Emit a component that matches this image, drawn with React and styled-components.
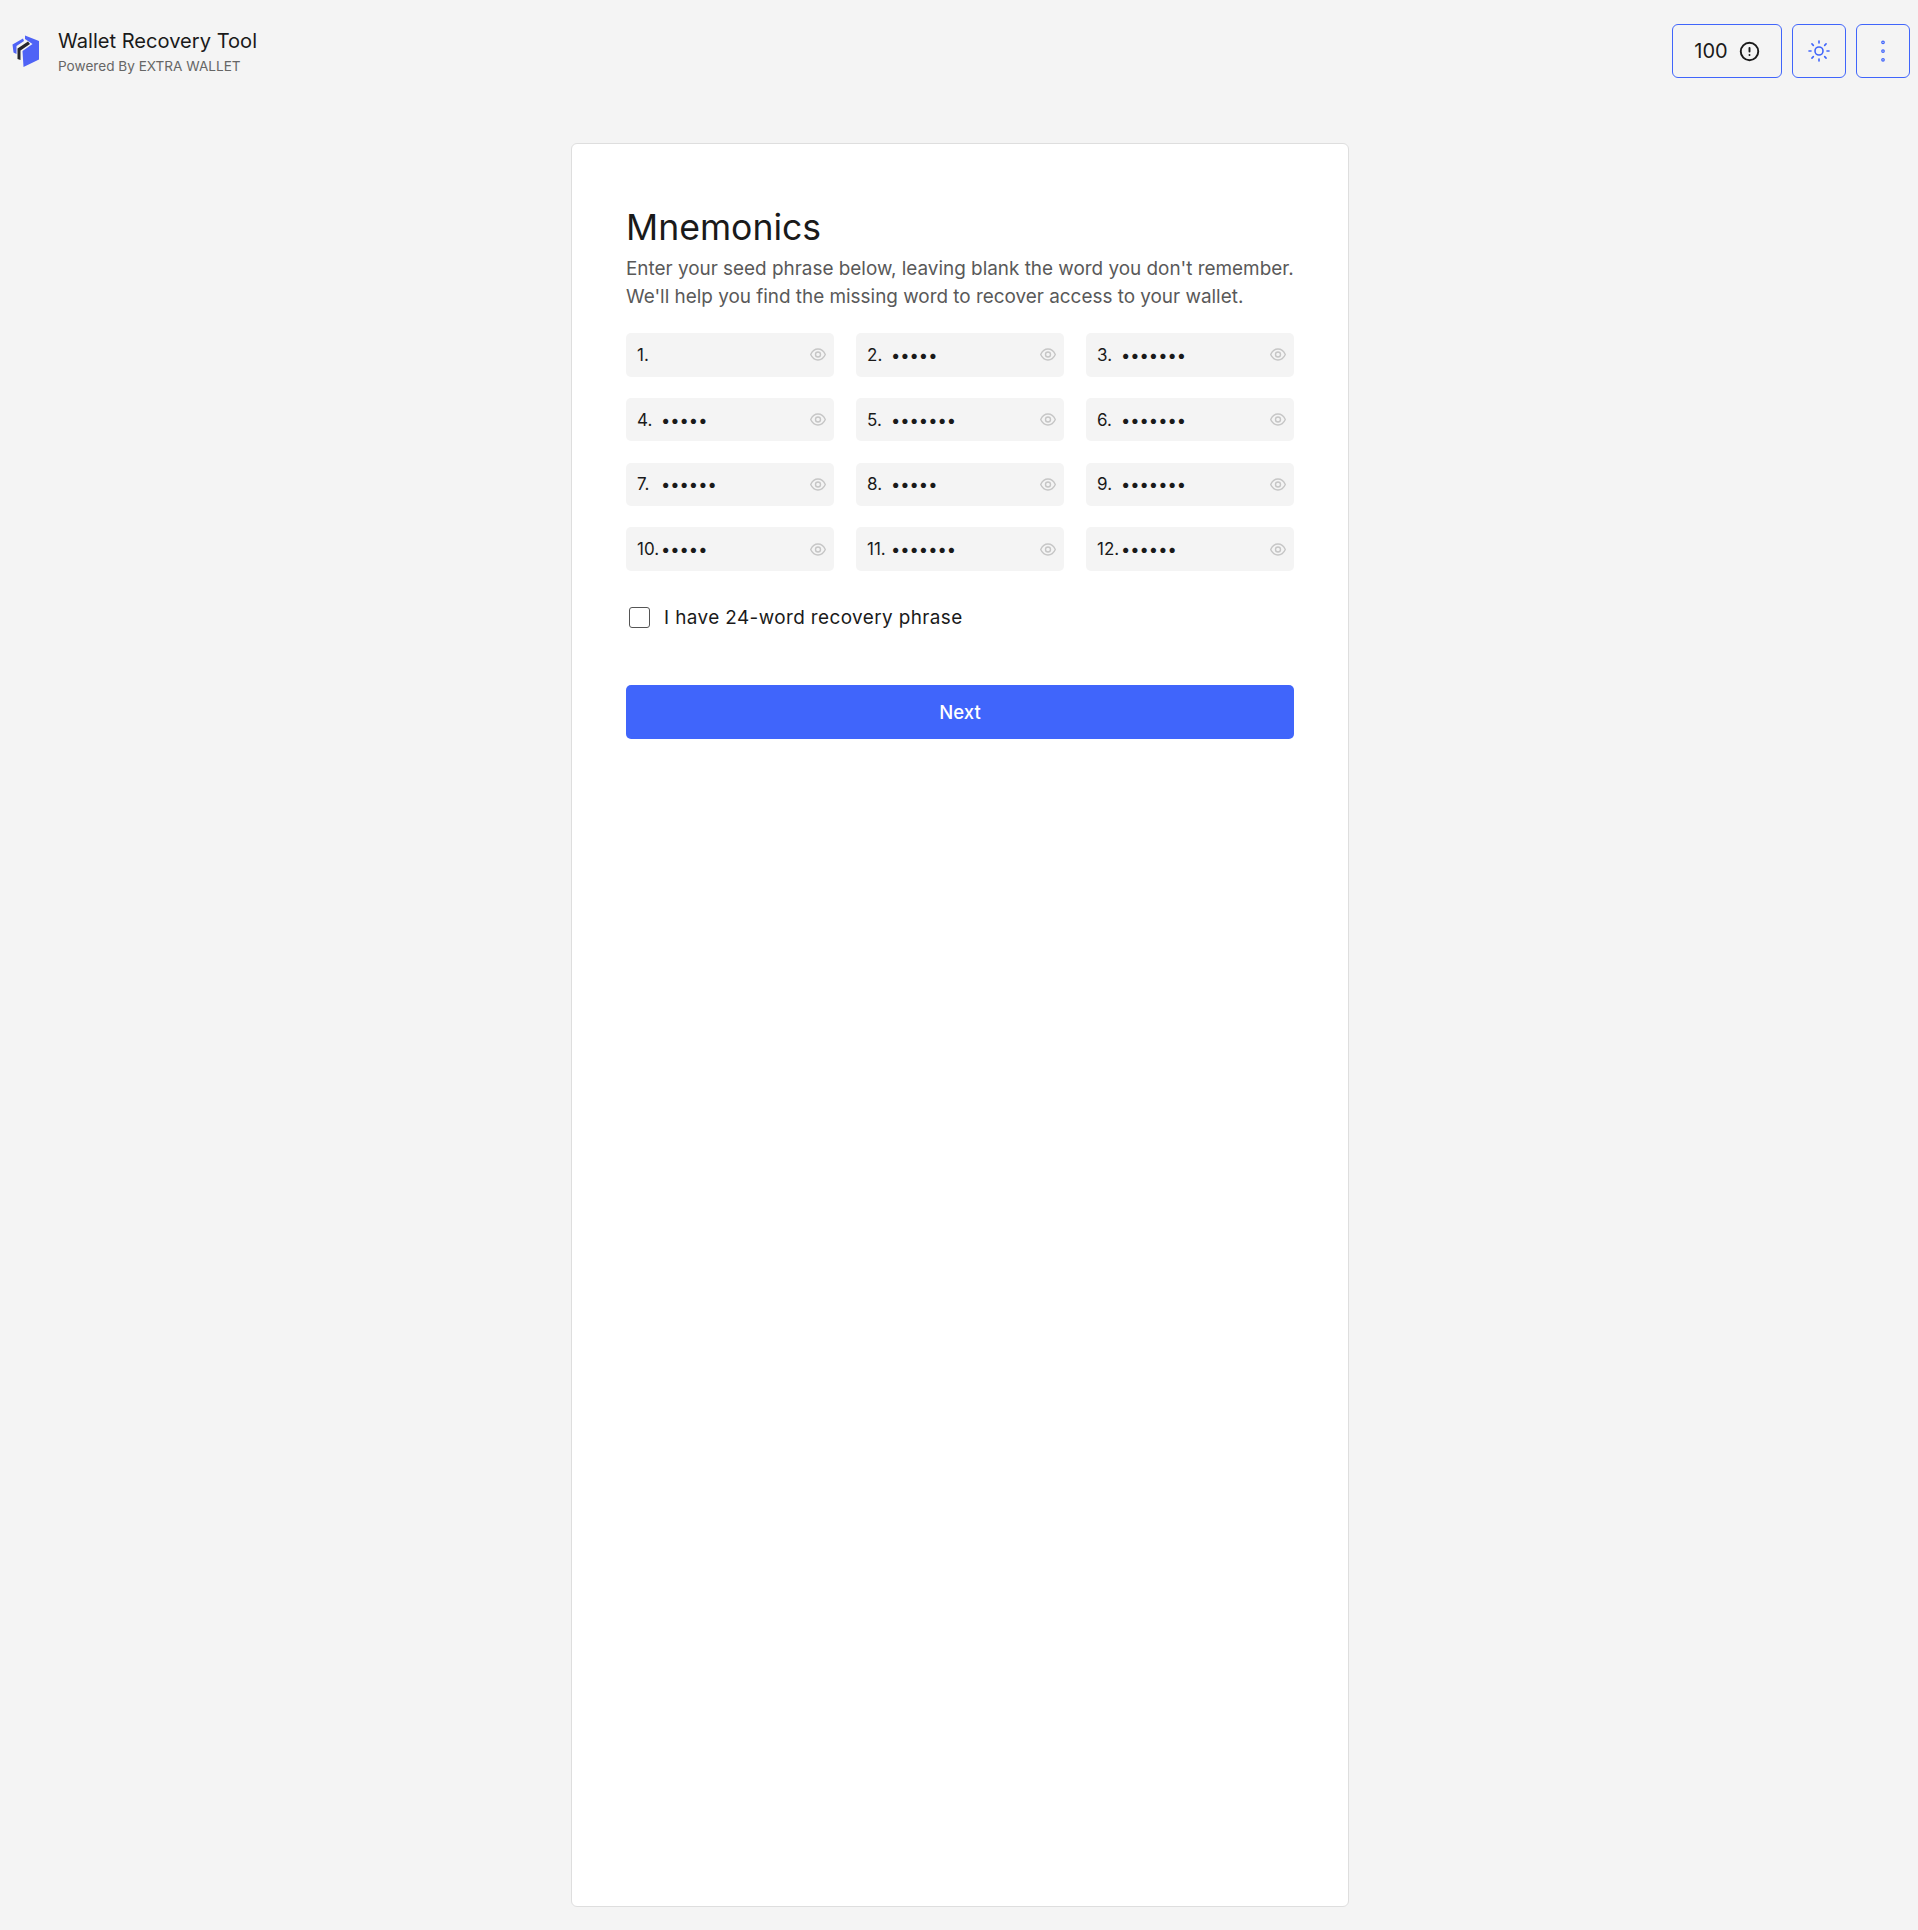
import React from 'react';
import styled, { createGlobalStyle } from 'styled-components';
import { Sun, CircleAlert, EllipsisVertical } from 'lucide-react';

const GlobalStyle = createGlobalStyle`
  html, body {
    margin: 0;
    padding: 0;
    background: #f4f4f4;
    font-family: Inter, "Liberation Sans", sans-serif;
    color: #1a1a1a;
  }
  * {
    box-sizing: border-box;
  }
`;

const Page = styled.div`
  width: 100%;
  height: 1930px;
  display: flex;
  flex-direction: column;
`;

const Header = styled.header`
  height: 143px;
  flex-shrink: 0;
  padding: 24px 8px 0 12px;
  display: flex;
  justify-content: space-between;
  align-items: flex-start;
`;

const Brand = styled.div`
  display: flex;
  align-items: center;
  gap: 18px;
  height: 54px;
`;

const BrandText = styled.div`
  display: flex;
  flex-direction: column;
  gap: 2px;
`;

const BrandTitle = styled.div`
  font-size: 20.1px;
  line-height: 28px;
  color: #1a1a1a;
`;

const BrandSub = styled.div`
  font-size: 13.6px;
  line-height: 18px;
  color: #666;
`;

const Actions = styled.div`
  display: flex;
  gap: 10px;
`;

const ActionButton = styled.button`
  height: 54px;
  width: ${(p) => (p.$wide ? '110px' : '54px')};
  padding: 0;
  display: flex;
  align-items: center;
  justify-content: center;
  gap: 11px;
  background: transparent;
  border: 1px solid #4065fb;
  border-radius: 6px;
  color: #4065fb;
  font-family: inherit;
`;

const CountText = styled.span`
  font-size: 20px;
  color: #1a1a1a;
`;

const Card = styled.main`
  width: 778px;
  height: 1764px;
  margin: 0 0 0 571px;
  padding: 61px 54px 0;
  background: #fff;
  border: 1px solid #dedede;
  border-radius: 6px;
`;

const Title = styled.h1`
  margin: 0 0 4px;
  font-size: 35.6px;
  line-height: 46px;
  font-weight: 400;
  color: #1a1a1a;
`;

const Description = styled.p`
  margin: 0 0 22px;
  font-size: 18.9px;
  line-height: 28px;
  color: #595959;
  white-space: nowrap;
`;

const WordGrid = styled.div`
  display: grid;
  grid-template-columns: repeat(3, 208px);
  column-gap: 22px;
  row-gap: 21.3px;
`;

const Field = styled.label`
  height: 43.5px;
  padding: 0 8px 0 11px;
  display: flex;
  align-items: center;
  background: #f4f4f4;
  border-radius: 5px;
`;

const FieldNumber = styled.span`
  width: 24px;
  flex-shrink: 0;
  font-size: 17px;
  white-space: nowrap;
  color: #1a1a1a;
`;

const WordInput = styled.input`
  flex: 1;
  min-width: 0;
  border: 0;
  outline: 0;
  padding: 0;
  background: transparent;
  font-family: inherit;
  font-size: 16.5px;
  color: #1a1a1a;
`;

const CheckRow = styled.label`
  display: flex;
  align-items: center;
  gap: 14px;
  margin: 33px 0 0 3px;
  height: 28px;
`;

const CheckBox = styled.span`
  width: 21px;
  height: 21px;
  background: #fff;
  border: 1px solid #555;
  border-radius: 3px;
`;

const CheckLabel = styled.span`
  font-size: 18.9px;
  letter-spacing: 0.41px;
  color: #1a1a1a;
`;

const NextButton = styled.button`
  width: 100%;
  height: 54px;
  margin-top: 53px;
  border: 0;
  border-radius: 5px;
  background: #4065fb;
  color: #fff;
  font-family: inherit;
  font-size: 18.5px;
  font-weight: 500;
`;

const Logo = () => (
  <svg width="28" height="34" viewBox="0 0 28 34" style={{ flexShrink: 0 }}>
    <path d="M13 1.5 L27 7 V25.5 L11.5 33 L10.5 17 L20.5 10 L13 5 Z" fill="#4f63f6" />
    <path d="M0.5 10.5 L11 4.5 L12 7 L4.5 12 V20 L1.5 18.5 Z" fill="#4f63f6" />
    <path d="M5.5 25 V14.5 L16 7.5 L18 10 L8.5 16.5 V26 Z" fill="#26262c" />
  </svg>
);

const EyeIcon = () => (
  <svg width="16" height="13" viewBox="0 0 16 13" fill="none" stroke="#c6c6c6" strokeWidth="1.4" style={{ flexShrink: 0 }}>
    <path d="M0.7 6.5 C2.4 2.8 5 1 8 1 C11 1 13.6 2.8 15.3 6.5 C13.6 10.2 11 12 8 12 C5 12 2.4 10.2 0.7 6.5 Z" />
    <circle cx="8" cy="6.5" r="2.5" />
  </svg>
);

const words = [0, 5, 7, 5, 7, 7, 6, 5, 7, 5, 7, 6];

export default function App() {
  return (
    <Page>
      <GlobalStyle />
      <Header>
        <Brand>
          <Logo />
          <BrandText>
            <BrandTitle>Wallet Recovery Tool</BrandTitle>
            <BrandSub>Powered By EXTRA WALLET</BrandSub>
          </BrandText>
        </Brand>
        <Actions>
          <ActionButton $wide>
            <CountText>100</CountText>
            <CircleAlert size={21} color="#1a1a1a" strokeWidth={2.2} />
          </ActionButton>
          <ActionButton>
            <Sun size={24} strokeWidth={1.6} />
          </ActionButton>
          <ActionButton>
            <EllipsisVertical size={30} strokeWidth={1} />
          </ActionButton>
        </Actions>
      </Header>
      <Card>
        <Title>Mnemonics</Title>
        <Description>
          Enter your seed phrase below, leaving blank the word you don't remember.
          <br />
          We'll help you find the missing word to recover access to your wallet.
        </Description>
        <WordGrid>
          {words.map((len, i) => (
            <Field key={i}>
              <FieldNumber>{i + 1}.</FieldNumber>
              <WordInput type="password" readOnly value={'x'.repeat(len)} />
              <EyeIcon />
            </Field>
          ))}
        </WordGrid>
        <CheckRow>
          <CheckBox />
          <CheckLabel>I have 24-word recovery phrase</CheckLabel>
        </CheckRow>
        <NextButton>Next</NextButton>
      </Card>
    </Page>
  );
}
